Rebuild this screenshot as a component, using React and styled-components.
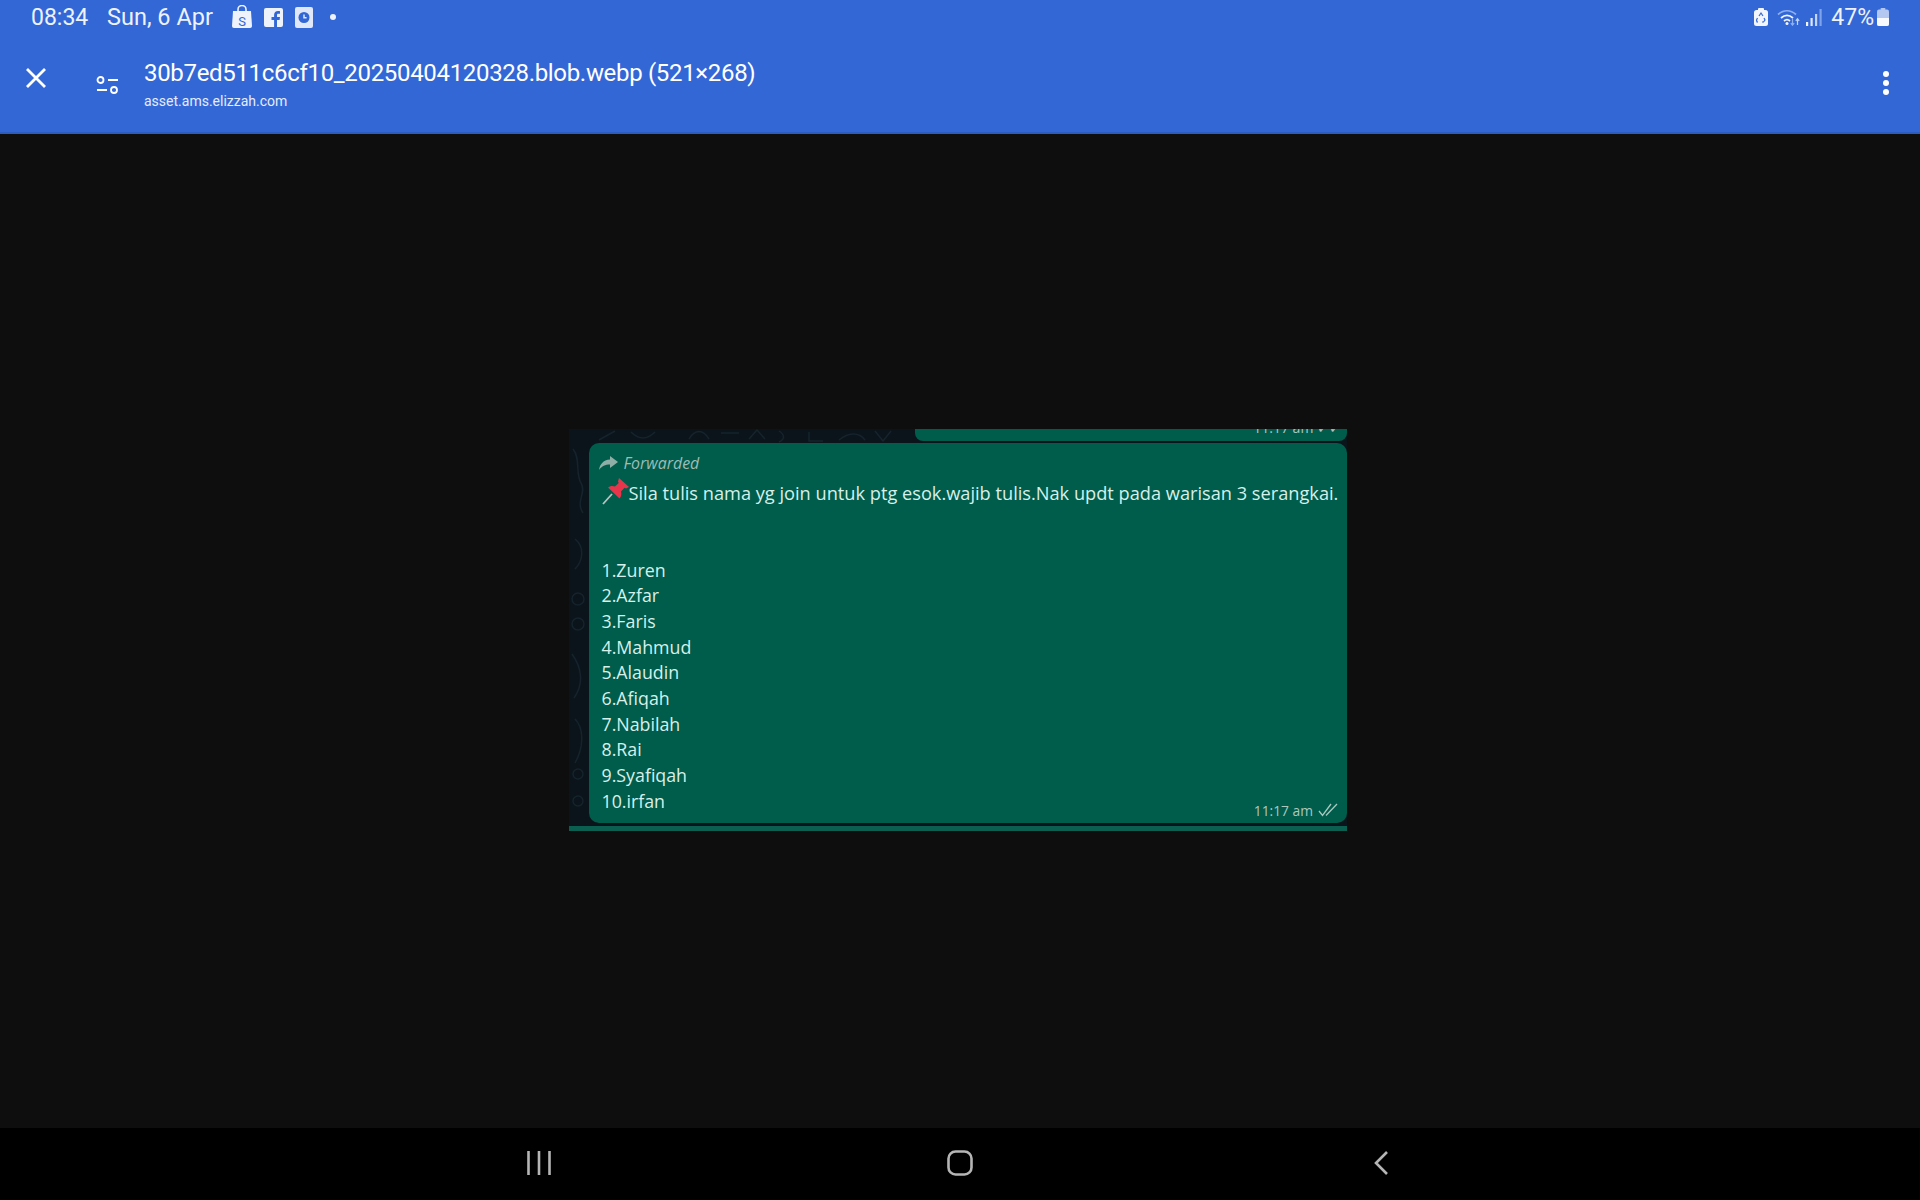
import styled, { createGlobalStyle } from "styled-components";

const names = [
  "1.Zuren",
  "2.Azfar",
  "3.Faris",
  "4.Mahmud",
  "5.Alaudin",
  "6.Afiqah",
  "7.Nabilah",
  "8.Rai",
  "9.Syafiqah",
  "10.irfan",
];

const App = () => {
  return (
    <Screen>
      <GlobalStyle />
      <Header>
        <StatusBar>
          <StatusLeft>
            <Clock>08:34</Clock>
            <DateText>Sun, 6 Apr</DateText>
            <NotifyIcons>
              <svg width="20" height="24" viewBox="0 0 20 24">
                <path d="M1 6h18l1 15a2 2 0 0 1-2 2H2a2 2 0 0 1-2-2z" fill="#eef2fb" />
                <path d="M6 7V4.500a4 4 0 0 1 8 0V7" fill="none" stroke="#eef2fb" strokeWidth="1.6" />
                <text x="10" y="20.500" textAnchor="middle" fontSize="13" fontFamily="Roboto" fill="#3367d6">S</text>
              </svg>
              <svg width="19" height="19" viewBox="0 0 19 19">
                <rect width="19" height="19" rx="2" fill="#eef2fb" />
                <path d="M13 19v-7h2.600l.4-3h-3V7.200c0-.9.300-1.400 1.500-1.400H16V3.200C15.700 3.100 14.900 3 14 3c-2.300 0-3.900 1.400-3.900 3.900V9H7.500v3h2.600v7z" fill="#3367d6" />
              </svg>
              <svg width="18" height="21" viewBox="0 0 18 21">
                <rect width="18" height="21" rx="2" fill="#dfe7f8" />
                <circle cx="9" cy="10.500" r="5.500" fill="#3367d6" />
                <path d="M9 7.500v3.200h2.600" fill="none" stroke="#dfe7f8" strokeWidth="1.500" />
              </svg>
              <Dot />
            </NotifyIcons>
          </StatusLeft>
          <StatusRight>
            <svg width="14" height="18" viewBox="0 0 14 18">
              <rect x="4" width="6" height="3" rx="1" fill="#f2f5fc" />
              <rect y="2" width="14" height="16" rx="2.500" fill="#f2f5fc" />
              <path d="M5 8l2-3 2 3M10 10l1 2-1.500 2H8M4 14H3l-.500-2 1-2" fill="none" stroke="#3367d6" strokeWidth="1.200" />
            </svg>
            <WifiGroup>
              <svg width="23" height="17" viewBox="0 0 23 17">
                <path d="M1 5.500C6.500.500 13.500.500 19 5.500" fill="none" stroke="#8fb0ee" strokeWidth="1.700" />
                <path d="M4 9c4-3.600 8-3.600 12 0" fill="none" stroke="#f2f5fc" strokeWidth="1.700" />
                <path d="M7 12c2-1.800 4-1.800 6 0" fill="none" stroke="#f2f5fc" strokeWidth="1.700" />
                <circle cx="10" cy="14.500" r="1.500" fill="#f2f5fc" />
                <path d="M15.500 10v6M13.800 14.200l1.700 2 1.700-2" fill="none" stroke="#8fb0ee" strokeWidth="1.200" />
                <path d="M20.500 16v-6M18.800 11.800l1.700-2 1.700 2" fill="none" stroke="#c4d4f4" strokeWidth="1.200" />
              </svg>
            </WifiGroup>
            <svg width="16" height="17" viewBox="0 0 16 17">
              <rect x="0" y="13" width="2.200" height="4" fill="#f2f5fc" />
              <rect x="4.500" y="9" width="2.200" height="8" fill="#dfe7f8" />
              <rect x="9" y="5" width="2.200" height="12" fill="#c4d4f4" />
              <rect x="13.500" y="0" width="2.200" height="17" fill="#7ea3e8" />
            </svg>
            <Percent>47%</Percent>
            <svg width="12" height="18" viewBox="0 0 12 18">
              <rect x="3.500" width="5" height="2" rx="1" fill="#b3c7f1" />
              <rect y="1.500" width="12" height="16.500" rx="2" fill="#b3c7f1" />
              <path d="M0 10h12v6a2 2 0 0 1-2 2H2a2 2 0 0 1-2-2z" fill="#f7f9fd" />
            </svg>
          </StatusRight>
        </StatusBar>
        <Toolbar>
          <CloseIcon width="22" height="22" viewBox="0 0 22 22">
            <path d="M2 2l18 18M20 2L2 20" stroke="#fff" strokeWidth="2.800" fill="none" />
          </CloseIcon>
          <FilterIcon width="24" height="18" viewBox="0 0 24 18">
            <circle cx="4.500" cy="4" r="3" fill="none" stroke="#fff" strokeWidth="1.800" />
            <path d="M12 4h10M1 14h10" stroke="#fff" strokeWidth="1.800" fill="none" />
            <circle cx="18" cy="14" r="3" fill="none" stroke="#fff" strokeWidth="1.800" />
          </FilterIcon>
          <TitleBlock>
            <Title>30b7ed511c6cf10_20250404120328.blob.webp (521×268)</Title>
            <Host>asset.ams.elizzah.com</Host>
          </TitleBlock>
          <MoreButton>
            <MoreDot />
            <MoreDot />
            <MoreDot />
          </MoreButton>
        </Toolbar>
      </Header>

      <Viewer>
        <Picture>
          <Doodles width="780" height="402" viewBox="0 0 780 402">
            <g fill="none" stroke="#15232c" strokeWidth="1.500">
              <path d="M4 20c8 10 2 24 8 34s-6 18 2 30M6 110c10 8 8 22 0 30M3 170a6 6 0 1 0 12 0a6 6 0 1 0-12 0M3 195a6 6 0 1 0 12 0a6 6 0 1 0-12 0M3 225c10 14 12 30 2 44M6 290c10 10 8 30 0 44M4 345a5 5 0 1 0 10 0a5 5 0 1 0-10 0M4 372a5 5 0 1 0 10 0a5 5 0 1 0-10 0" />
              <path d="M30 11l16-9M62 3c8 8 16 8 24 0M120 10c6-10 14-10 20 0M152 4h18M180 10l8-9 8 9M210 2c6 4 6 8 0 11M240 3v9h14M270 11c10-8 20-8 26 0M306 2l8 10 8-10" />
            </g>
          </Doodles>
          <PreviousBubble>
            <PreviousTime>11:17 am ✓✓</PreviousTime>
          </PreviousBubble>
          <Bubble>
            <Forwarded>
              <svg width="19" height="14" viewBox="0 0 19 14">
                <path d="M11 0l8 6-8 6V8.500C6 8.500 3 10 0 14c.8-5.500 4-10 11-10.500z" fill="#90aea6" />
              </svg>
              <ForwardedLabel>Forwarded</ForwardedLabel>
            </Forwarded>
            <MessageLine>
              <PinIcon width="27" height="27" viewBox="0 0 27 27">
                <path d="M1 26l9-10" stroke="#b9c4c2" strokeWidth="1.800" fill="none" />
                <path d="M17 0l10 9-3 1.500-1.500-.700-3.500 3.700c.8 3 .2 5-1.500 7L6 9.500c2-1.700 4.500-2 7-1l3.700-3.500-.700-1.500z" fill="#e8354b" />
              </PinIcon>
              <span>Sila tulis nama yg join untuk ptg esok.wajib tulis.Nak updt pada warisan 3 serangkai.</span>
            </MessageLine>
            <BubbleFooter>
              <NameList>
                {names.map((name) => (
                  <li key={name}>{name}</li>
                ))}
              </NameList>
              <Meta>
                <span>11:17 am</span>
                <svg width="20" height="14" viewBox="0 0 20 14">
                  <path d="M1 8l3.500 4.500L13 1M8 12.500L19 1" stroke="#a9c9c0" strokeWidth="1.300" fill="none" />
                </svg>
              </Meta>
            </BubbleFooter>
          </Bubble>
          <NextBubbleEdge />
        </Picture>
      </Viewer>

      <NavBar>
        <svg width="24" height="24" viewBox="0 0 24 24">
          <path d="M1.500 0v24M12 0v24M22.500 0v24" stroke="#b5b5b5" strokeWidth="2.600" fill="none" />
        </svg>
        <svg width="26" height="26" viewBox="0 0 26 26">
          <rect x="1.500" y="1.500" width="23" height="23" rx="7" stroke="#b5b5b5" strokeWidth="2.600" fill="none" />
        </svg>
        <svg width="14" height="24" viewBox="0 0 14 24">
          <path d="M13 1L2 12l11 11" stroke="#b5b5b5" strokeWidth="2.600" fill="none" />
        </svg>
      </NavBar>
    </Screen>
  );
};

export default App;

const GlobalStyle = createGlobalStyle`
  html, body {
    margin: 0;
    padding: 0;
    background: #0e0e0e;
  }
  * {
    box-sizing: border-box;
  }
`;

const Screen = styled.div`
  width: 1920px;
  height: 1200px;
  display: flex;
  flex-direction: column;
  overflow: hidden;
  font-family: Roboto, "Liberation Sans", sans-serif;
`;

const Header = styled.header`
  height: 134px;
  flex: none;
  background: #3367d6;
  border-bottom: 2px solid #2d5cbf;
  color: #fff;
`;

const StatusBar = styled.div`
  height: 34px;
  padding: 0 31px;
  display: flex;
  align-items: center;
  justify-content: space-between;
  color: #eef2fb;
`;

const StatusLeft = styled.div`
  display: flex;
  align-items: center;
`;

const Clock = styled.span`
  font-size: 23px;
  width: 76px;
`;

const DateText = styled.span`
  font-size: 23.5px;
  width: 125px;
`;

const NotifyIcons = styled.div`
  display: flex;
  align-items: center;
  gap: 12px;
`;

const Dot = styled.span`
  width: 6px;
  height: 6px;
  margin-left: 5px;
  border-radius: 50%;
  background: #eef2fb;
`;

const StatusRight = styled.div`
  display: flex;
  align-items: center;
`;

const WifiGroup = styled.div`
  display: flex;
  margin: 0 6px 0 9px;
`;

const Percent = styled.span`
  font-size: 23px;
  margin: 0 3px 0 9px;
`;

const Toolbar = styled.div`
  height: 98px;
  display: flex;
  align-items: center;
  padding-left: 25px;
`;

const CloseIcon = styled.svg`
  flex: none;
  margin-bottom: 10px;
`;

const FilterIcon = styled.svg`
  flex: none;
  margin: 3px 0 0 49px;
`;

const TitleBlock = styled.div`
  margin: 2px 0 0 24px;
  display: flex;
  flex-direction: column;
  gap: 4px;
  flex: 1;
`;

const Title = styled.div`
  font-size: 24px;
  letter-spacing: -0.32px;
  line-height: 30px;
`;

const Host = styled.div`
  font-size: 14px;
  line-height: 18px;
  color: #e6ecfa;
`;

const MoreButton = styled.div`
  width: 6px;
  margin-right: 31px;
  display: flex;
  flex-direction: column;
  gap: 3px;
`;

const MoreDot = styled.span`
  width: 6px;
  height: 6px;
  border-radius: 50%;
  background: #fff;
`;

const Viewer = styled.main`
  flex: 1;
  display: flex;
  align-items: center;
  justify-content: center;
  background: #0e0e0e;
  padding: 0 4px 3px 0;
`;

const Picture = styled.div`
  position: relative;
  width: 778px;
  height: 402px;
  padding-left: 20px;
  display: flex;
  flex-direction: column;
  overflow: hidden;
  background: #0b141a;
  font-family: "Open Sans", "Noto Sans", sans-serif;
`;

const Doodles = styled.svg`
  position: absolute;
  left: 0;
  top: 0;
`;

const PreviousBubble = styled.div`
  position: relative;
  align-self: flex-end;
  width: 432px;
  height: 12px;
  display: flex;
  justify-content: flex-end;
  align-items: flex-end;
  padding-right: 6px;
  overflow: hidden;
  background: #005c4b;
  border-radius: 0 0 8px 8px;
`;

const PreviousTime = styled.span`
  flex: none;
  font-size: 14px;
  line-height: 14px;
  margin-bottom: 6px;
  color: #a9c9c0;
  white-space: nowrap;
`;

const Bubble = styled.div`
  position: relative;
  height: 380px;
  margin-top: 2px;
  padding: 9px 9px 2px 12.5px;
  display: flex;
  flex-direction: column;
  background: #005c4b;
  border-radius: 10px;
  color: #d6f0ea;
`;

const Forwarded = styled.div`
  height: 22px;
  margin-left: -3px;
  display: flex;
  align-items: center;
  gap: 6px;
`;

const ForwardedLabel = styled.span`
  font-size: 15.9px;
  font-style: italic;
  color: #9dbdb5;
`;

const MessageLine = styled.div`
  height: 26px;
  margin: 6px 0 52px;
  display: flex;
  align-items: center;
  font-size: 18.22px;
  white-space: nowrap;
`;

const PinIcon = styled.svg`
  flex: none;
  margin-top: -3px;
`;

const BubbleFooter = styled.div`
  display: flex;
  justify-content: space-between;
  align-items: flex-end;
`;

const NameList = styled.ul`
  margin: 0;
  padding: 0;
  list-style: none;
  font-size: 17.8px;
  line-height: 25.7px;
`;

const Meta = styled.div`
  display: flex;
  align-items: center;
  gap: 5px;
  margin-bottom: -5px;
  font-size: 13.8px;
  color: #a9c9c0;
`;

const NextBubbleEdge = styled.div`
  position: relative;
  height: 5px;
  margin: 3px 0 0 -20px;
  background: #0b5f50;
`;

const NavBar = styled.nav`
  height: 72px;
  flex: none;
  padding-bottom: 2px;
  background: #000;
  display: grid;
  grid-template-columns: repeat(3, 421px);
  justify-content: center;
  align-items: center;
  justify-items: center;
`;
